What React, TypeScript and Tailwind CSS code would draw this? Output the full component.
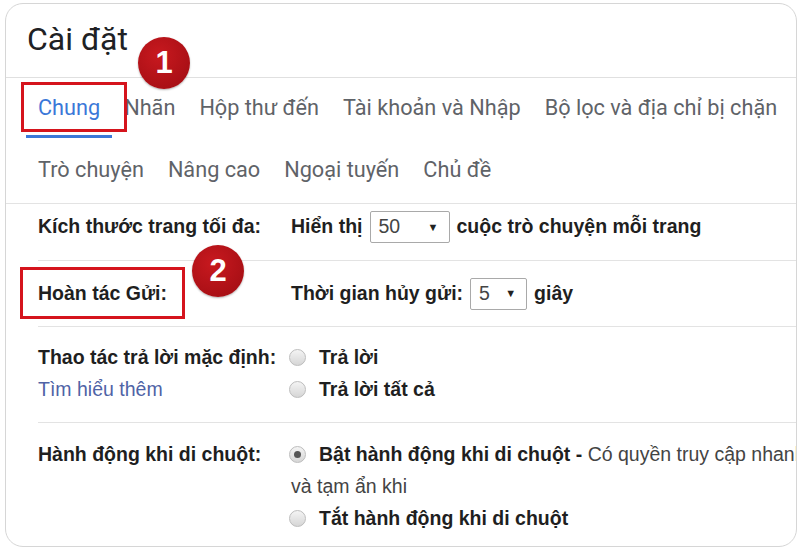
import React from 'react';

const TABS_TOP = ['Chung', 'Nhãn', 'Hộp thư đến', 'Tài khoản và Nhập', 'Bộ lọc và địa chỉ bị chặn'];
const TABS_BOTTOM = ['Trò chuyện', 'Nâng cao', 'Ngoại tuyến', 'Chủ đề'];

function Select({ value, width }: { value: string; width: string }) {
  return (
    <span
      className={`mx-[7px] inline-flex h-[32px] items-center justify-between rounded-[2px] border border-[#a9a9a9] bg-white pl-[8px] pr-[10px] font-normal text-[#444] ${width}`}
    >
      <span>{value}</span>
      <span className="text-[11px] text-[#222]">▼</span>
    </span>
  );
}

function Radio({ checked }: { checked?: boolean }) {
  return (
    <span className="mr-[13px] ml-[-2px] inline-flex h-[17px] w-[17px] shrink-0 items-center justify-center rounded-full border border-[#bdbdbd] bg-gradient-to-b from-[#f4f4f4] to-[#d6d6d6]">
      {checked && <span className="h-[7px] w-[7px] rounded-full bg-[#555]" />}
    </span>
  );
}

function Marker({ n, className }: { n: string; className: string }) {
  return (
    <div
      className={`absolute flex h-[52px] w-[52px] items-center justify-center rounded-full bg-[radial-gradient(circle_at_40%_35%,#c8191f,#9e0c12)] text-[31px] font-bold text-white shadow-[0_1px_2px_rgba(0,0,0,0.3)] ${className}`}
      style={{ fontFamily: '"Liberation Sans", Arial, sans-serif' }}
    >
      {n}
    </div>
  );
}

export default function App() {
  return (
    <div className="relative h-[550px] w-[800px] overflow-hidden bg-white">
      <div className="ml-[5px] mt-[3px] h-[544px] w-[792px] overflow-hidden rounded-[18px] border border-[#d6d6d6]">
        {/* header */}
        <div
          className="flex h-[74px] items-center border-b border-[#e0e0e0] pb-[3px] pl-[21px] text-[32px] text-[#202124]"
          style={{ fontFamily: 'Roboto, "Open Sans", sans-serif' }}
        >
          Cài đặt
        </div>

        {/* tabs */}
        <div style={{ fontFamily: 'Roboto, "Open Sans", sans-serif' }} className="text-[21.7px] text-[#5f6368]">
          <div className="flex h-[60px] pl-[20px]">
            {TABS_TOP.map((t, i) => (
              <div
                key={t}
                className={`flex items-center px-[12px] whitespace-nowrap ${
                  i === 0 ? 'border-b-[3px] border-[#3b78d8] pt-[3px] text-[#3b78d8]' : ''
                }`}
              >
                {t}
              </div>
            ))}
          </div>
          <div className="flex h-[66px] items-center border-b border-[#e3e3e3] pl-[20px]">
            {TABS_BOTTOM.map((t) => (
              <div key={t} className="px-[12px] whitespace-nowrap">
                {t}
              </div>
            ))}
          </div>
        </div>

        {/* settings */}
        <div
          className="ml-[32px] text-[19.5px] font-bold text-[#1f1f1f]"
          style={{ fontFamily: '"Liberation Sans", Arial, sans-serif' }}
        >
          <div className="flex h-[57px] items-center border-b border-[#e3e3e3] pb-[10px]">
            <div className="w-[253px] shrink-0">Kích thước trang tối đa:</div>
            <div className="flex items-center whitespace-nowrap">
              Hiển thị
              <Select value="50" width="w-[80px]" />
              cuộc trò chuyện mỗi trang
            </div>
          </div>

          <div className="flex h-[66px] items-center border-b border-[#e3e3e3]">
            <div className="w-[253px] shrink-0">Hoàn tác Gửi:</div>
            <div className="flex items-center whitespace-nowrap">
              Thời gian hủy gửi:
              <Select value="5" width="w-[57px]" />
              giây
            </div>
          </div>

          <div className="flex border-b border-[#e3e3e3] pt-[14px] pb-[17px] leading-[32px]">
            <div className="w-[253px] shrink-0">
              <div>Thao tác trả lời mặc định:</div>
              <div className="font-normal text-[#4f63a6]">Tìm hiểu thêm</div>
            </div>
            <div>
              <div className="flex items-center">
                <Radio />
                Trả lời
              </div>
              <div className="flex items-center">
                <Radio />
                Trả lời tất cả
              </div>
            </div>
          </div>

          <div className="flex pt-[15px] leading-[32px]">
            <div className="w-[253px] shrink-0">Hành động khi di chuột:</div>
            <div className="min-w-0">
              <div className="flex items-center whitespace-nowrap">
                <Radio checked />
                Bật hành động khi di chuột -&nbsp;
                <span className="font-normal text-[#444]">Có quyền truy cập nhanh</span>
              </div>
              <div className="font-normal text-[#444]">và tạm ẩn khi</div>
              <div className="flex items-center whitespace-nowrap">
                <Radio />
                Tắt hành động khi di chuột
              </div>
            </div>
          </div>
        </div>
      </div>

      {/* annotations */}
      <div className="absolute left-[21px] top-[82px] h-[50px] w-[106px] border-[3px] border-[#d5141d]" />
      <div className="absolute left-[20px] top-[267px] h-[52px] w-[165px] border-[3px] border-[#d5141d]" />
      <Marker n="1" className="left-[138px] top-[37px]" />
      <Marker n="2" className="left-[192px] top-[245px]" />
    </div>
  );
}
